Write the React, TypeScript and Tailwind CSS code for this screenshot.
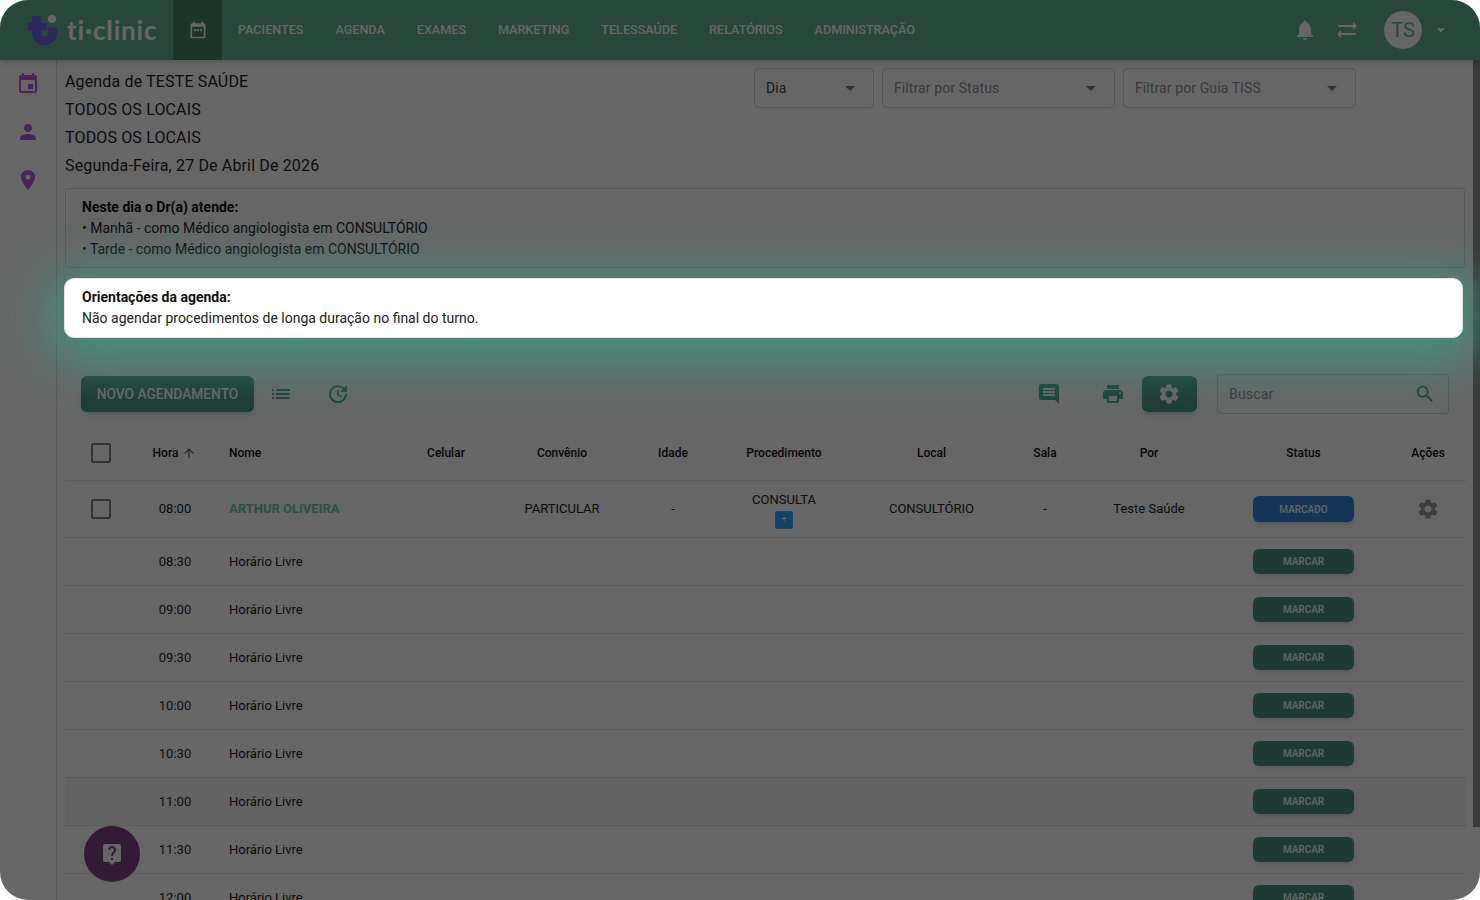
import React from 'react';

const icons = {
  event: 'M17 12h-5v5h5v-5zM16 1v2H8V1H6v2H5c-1.11 0-1.99.9-1.99 2L3 19c0 1.1.89 2 2 2h14c1.1 0 2-.9 2-2V5c0-1.1-.9-2-2-2h-1V1h-2zm3 18H5V8h14v11z',
  person: 'M12 12c2.21 0 4-1.79 4-4s-1.79-4-4-4-4 1.79-4 4 1.79 4 4 4zm0 2c-2.67 0-8 1.34-8 4v2h16v-2c0-2.66-5.33-4-8-4z',
  room: 'M12 2C8.13 2 5 5.13 5 9c0 5.25 7 13 7 13s7-7.75 7-13c0-3.87-3.13-7-7-7zm0 9.5c-1.38 0-2.5-1.12-2.5-2.5s1.12-2.5 2.5-2.5 2.5 1.12 2.5 2.5-1.12 2.5-2.5 2.5z',
  bell: 'M12 22c1.1 0 2-.9 2-2h-4c0 1.1.89 2 2 2zm6-6v-5c0-3.07-1.64-5.64-4.5-6.32V4c0-.83-.67-1.5-1.5-1.5s-1.5.67-1.5 1.5v.68C7.63 5.36 6 7.92 6 11v5l-2 2v1h16v-1l-2-2z',
  syncAlt: 'M22 8l-4-4v3H3v2h15v3l4-4zM2 16l4 4v-3h15v-2H6v-3l-4 4z',
  caret: 'M7 10l5 5 5-5z',
  chat: 'M21.99 4c0-1.1-.89-2-1.99-2H4c-1.1 0-2 .9-2 2v12c0 1.1.9 2 2 2h14l4 4-.01-18zM18 14H6v-2h12v2zm0-3H6V9h12v2zm0-3H6V6h12v2z',
  print: 'M19 8H5c-1.66 0-3 1.34-3 3v6h4v4h12v-4h4v-6c0-1.66-1.34-3-3-3zm-3 11H8v-5h8v5zm3-7c-.55 0-1-.45-1-1s.45-1 1-1 1 .45 1 1-.45 1-1 1zm-1-9H6v4h12V3z',
  gear: 'M19.14 12.94c.04-.3.06-.61.06-.94 0-.32-.02-.64-.07-.94l2.03-1.58c.18-.14.23-.41.12-.61l-1.92-3.32c-.12-.22-.37-.29-.59-.22l-2.39.96c-.5-.38-1.03-.7-1.62-.94l-.36-2.54c-.04-.24-.24-.41-.48-.41h-3.84c-.24 0-.43.17-.47.41l-.36 2.54c-.59.24-1.13.57-1.62.94l-2.39-.96c-.22-.08-.47 0-.59.22L2.74 8.87c-.12.21-.08.47.12.61l2.03 1.58c-.05.3-.09.63-.09.94s.02.64.07.94l-2.03 1.58c-.18.14-.23.41-.12.61l1.92 3.32c.12.22.37.29.59.22l2.39-.96c.5.38 1.03.7 1.62.94l.36 2.54c.05.24.24.41.48.41h3.84c.24 0 .44-.17.47-.41l.36-2.54c.59-.24 1.13-.56 1.62-.94l2.39.96c.22.08.47 0 .59-.22l1.92-3.32c.12-.22.07-.47-.12-.61l-2.01-1.58zM12 15.6c-1.98 0-3.6-1.62-3.6-3.6s1.62-3.6 3.6-3.6 3.6 1.62 3.6 3.6-1.62 3.6-3.6 3.6z',
  search: 'M15.5 14h-.79l-.28-.27C15.41 12.59 16 11.11 16 9.5 16 5.91 13.09 3 9.5 3S3 5.91 3 9.5 5.91 16 9.5 16c1.61 0 3.09-.59 4.23-1.57l.27.28v.79l5 4.99L20.49 19l-4.99-5zm-6 0C7.01 14 5 11.99 5 9.5S7.01 5 9.5 5 14 7.01 14 9.5 11.99 14 9.5 14z',
  list: 'M3 13h2v-2H3v2zm0 4h2v-2H3v2zm0-8h2V7H3v2zm4 4h14v-2H7v2zm0 4h14v-2H7v2zM7 7v2h14V7H7z',
  update: 'M21 10.12h-6.78l2.74-2.82c-2.73-2.7-7.15-2.8-9.88-.1-2.73 2.71-2.73 7.08 0 9.79s7.15 2.71 9.88 0C18.32 15.65 19 14.08 19 12.1h2c0 1.98-.88 4.55-2.64 6.29-3.51 3.48-9.21 3.48-12.72 0-3.5-3.47-3.53-9.11-.02-12.58s9.14-3.47 12.65 0L21 3v7.12zM12.5 8v4.25l3.5 2.08-.72 1.21L11 13V8h1.5z',
  up: 'M4 12l1.41 1.41L11 7.83V20h2V7.83l5.58 5.59L20 12l-8-8-8 8z',
  help: 'M19 2H5c-1.11 0-2 .9-2 2v14c0 1.1.89 2 2 2h4l3 3 3-3h4c1.1 0 2-.9 2-2V4c0-1.1-.9-2-2-2zm-6 16h-2v-2h2v2zm2.07-7.75l-.9.92C13.45 11.9 13 12.5 13 14h-2v-.5c0-1.1.45-2.1 1.17-2.83l1.24-1.26c.37-.36.59-.86.59-1.41 0-1.1-.9-2-2-2s-2 .9-2 2H8c0-2.21 1.79-4 4-4s4 1.79 4 4c0 .88-.36 1.68-.93 2.25z',
  calendar: 'M19 4h-1V2h-2v2H8V2H6v2H5c-1.1 0-2 .9-2 2v14c0 1.1.9 2 2 2h14c1.1 0 2-.9 2-2V6c0-1.1-.9-2-2-2zm0 16H5V8h14v12zM7 11h2.5v2.5H7V11zm3.75 0h2.5v2.5h-2.5V11zM14.5 11H17v2.5h-2.5V11z',
};

const Icon = ({ d, className }: { d: string; className: string }) => (
  <svg viewBox="0 0 24 24" fill="currentColor" className={className}>
    <path d={d} />
  </svg>
);

const navItems = ['PACIENTES', 'AGENDA', 'EXAMES', 'MARKETING', 'TELESSAÚDE', 'RELATÓRIOS', 'ADMINISTRAÇÃO'];
const freeSlots = ['08:30', '09:00', '09:30', '10:00', '10:30', '11:00', '11:30', '12:00'];
const columns = 'grid grid-cols-[72px_76px_187px_92px_140px_82px_140px_155px_72px_136px_173px_76px] items-center';

const Select = ({ label, width, muted }: { label: string; width: string; muted?: boolean }) => (
  <div className={`${width} h-10 flex items-center justify-between pl-[11px] pr-[11px] rounded border border-[#d5d5d5] text-sm tracking-[0.1px] ${muted ? 'text-[#8e8e8e]' : 'text-[#444]'}`}>
    <span>{label}</span>
    <Icon d={icons.caret} className="size-6 text-[#7a7a7a]" />
  </div>
);

const Checkbox = () => <span className="block size-5 rounded-[2px] border-2 border-[#808080]" />;

export default function App() {
  return (
    <div className="w-[1480px] h-[900px] bg-white [font-family:Roboto,sans-serif]">
      <div className="relative w-full h-full rounded-[28px] overflow-hidden bg-white text-[#222]">
        <header className="relative flex items-center h-[60px] pl-[27px] pr-[29px] bg-[#64b294] text-white shadow-md">
          <svg viewBox="27 13 32 33" className="w-8 h-[33px] shrink-0">
            <path d="M36.5 15V32a8 8 0 0 0 16 0V26.5" fill="none" stroke="#7468e0" strokeWidth="9" />
            <rect x="28" y="22" width="19" height="7.5" fill="#7468e0" />
            <circle cx="52" cy="18" r="4" fill="#fff" />
          </svg>
          <span className="ml-2 w-[106px] text-[26px] leading-none font-bold tracking-[0.85px] [font-family:Lato,sans-serif]">ti·clinic</span>
          <div className="flex items-center justify-center w-[49px] h-full bg-[#448466]">
            <Icon d={icons.calendar} className="size-5" />
          </div>
          <nav className="flex">
            {navItems.map((item) => (
              <span key={item} className="px-4 text-[12.6px] font-medium">{item}</span>
            ))}
          </nav>
          <div className="ml-auto flex items-center">
            <Icon d={icons.bell} className="size-6" />
            <Icon d={icons.syncAlt} className="size-6 ml-[18px]" />
            <span className="ml-[25px] flex items-center justify-center size-[38px] rounded-full bg-white text-[#64b294] text-xl">TS</span>
            <Icon d={icons.caret} className="size-5 ml-[9px]" />
          </div>
        </header>

        <div className="flex">
          <aside className="w-[57px] h-[840px] shrink-0 border-r border-[#d8d8d8] text-[#a85cd8]">
            {[icons.event, icons.person, icons.room].map((d) => (
              <div key={d} className="flex items-center justify-center h-12">
                <Icon d={d} className="size-6" />
              </div>
            ))}
          </aside>

          <main className="w-[1416px] px-2 pt-2">
            <div className="flex justify-between">
              <div className="text-base leading-7 tracking-[0.15px]">
                <p>Agenda de TESTE SAÚDE</p>
                <p>TODOS OS LOCAIS</p>
                <p>TODOS OS LOCAIS</p>
                <p>Segunda-Feira, 27 De Abril De 2026</p>
              </div>
              <div className="flex gap-2 mr-[109px]">
                <Select label="Dia" width="w-[120px]" />
                <Select label="Filtrar por Status" width="w-[233px]" muted />
                <Select label="Filtrar por Guia TISS" width="w-[233px]" muted />
              </div>
            </div>

            <div className="mt-2 h-20 px-4 py-2 rounded border border-[#d5d5d5] text-sm leading-[21px]">
              <p className="font-bold text-[#111]">Neste dia o Dr(a) atende:</p>
              <p>• Manhã - como Médico angiologista em CONSULTÓRIO</p>
              <p>• Tarde - como Médico angiologista em CONSULTÓRIO</p>
            </div>

            <div className="relative z-20 mt-[10px] w-[1399px] h-[60px] -ml-px px-[17px] py-2 rounded-[10px] bg-white border border-[#dfe3e3] text-sm leading-[21px] text-[#222] shadow-[0_10px_50px_14px_rgba(66,150,130,0.9)]">
              <p className="font-bold text-[#111]">Orientações da agenda:</p>
              <p>Não agendar procedimentos de longa duração no final do turno.</p>
            </div>

            <div className="mt-9 h-10 flex items-center pl-4 pr-4">
              <button className="h-9 w-[173px] rounded-md bg-[#4a9583] text-white text-[13.75px] font-medium shadow-md">NOVO AGENDAMENTO</button>
              <Icon d={icons.list} className="size-6 ml-[15px] text-[#4fa88e]" />
              <Icon d={icons.update} className="size-6 ml-[33px] text-[#4fa88e]" />
              <Icon d={icons.chat} className="size-6 ml-auto text-[#4fa88e]" />
              <Icon d={icons.print} className="size-6 ml-10 text-[#4fa88e]" />
              <button className="ml-[17px] flex items-center justify-center h-9 w-[55px] pr-0.5 rounded-md bg-[#4a9583] text-white shadow-md">
                <Icon d={icons.gear} className="size-6" />
              </button>
              <div className="ml-5 flex items-center justify-between w-[232px] h-10 pl-[11px] pr-3 rounded border border-[#d5d5d5] text-sm tracking-[0.2px] text-[#8e8e8e]">
                <span>Buscar</span>
                <Icon d={icons.search} className="size-[22px] text-[#4fa88e]" />
              </div>
            </div>

            <div className="mt-[11px] w-[1401px]">
              <div className={`${columns} h-14 border-b border-[#e0e0e0] text-xs font-medium text-[#111] text-center`}>
                <span className="flex justify-center"><Checkbox /></span>
                <span className="flex items-center justify-center gap-1 pr-px">Hora<Icon d={icons.up} className="size-3.5 text-[#555]" /></span>
                <span className="text-left pl-4">Nome</span>
                <span>Celular</span>
                <span>Convênio</span>
                <span>Idade</span>
                <span>Procedimento</span>
                <span>Local</span>
                <span>Sala</span>
                <span>Por</span>
                <span>Status</span>
                <span>Ações</span>
              </div>

              <div className={`${columns} h-[57px] border-b border-[#e0e0e0] text-[13px] text-center`}>
                <span className="flex justify-center"><Checkbox /></span>
                <span>08:00</span>
                <span className="text-left pl-4 font-bold text-[#66cdaa]">ARTHUR OLIVEIRA</span>
                <span />
                <span>PARTICULAR</span>
                <span>-</span>
                <span className="flex flex-col items-center pt-px">
                  CONSULTA
                  <span className="mt-px flex items-center justify-center size-[18px] rounded-[2px] bg-[#2ca8ff] text-white text-[9px] leading-none">+</span>
                </span>
                <span>CONSULTÓRIO</span>
                <span>-</span>
                <span>Teste Saúde</span>
                <span className="flex justify-center">
                  <span className="flex items-center justify-center w-[101px] h-[26px] rounded-md bg-[#3586d6] text-white text-[10px] font-medium shadow-md">MARCADO</span>
                </span>
                <span className="flex justify-center"><Icon d={icons.gear} className="size-6 text-[#9a9a9a]" /></span>
              </div>

              {freeSlots.map((time) => (
                <div key={time} className={`${columns} h-12 border-b border-[#e0e0e0] text-[13px] text-center ${time === '11:00' ? 'bg-[#f7f7f7]' : ''}`}>
                  <span />
                  <span>{time}</span>
                  <span className="text-left pl-4">Horário Livre</span>
                  <span className="col-start-11 flex justify-center">
                    <span className="flex items-center justify-center w-[101px] h-[25px] rounded-md bg-[#4a9583] text-white text-[10px] font-medium shadow-md">MARCAR</span>
                  </span>
                </div>
              ))}
            </div>
          </main>

          <div className="w-[7px] shrink-0">
            <div className="h-[767px] bg-[#8e8e8e]" />
          </div>
        </div>

        <div className="absolute left-[84px] top-[826px] z-[5] flex items-center justify-center size-14 rounded-full bg-[#804588] text-white">
          <Icon d={icons.help} className="size-6" />
        </div>

        <div className="absolute inset-0 z-10 bg-black/60" />
      </div>
    </div>
  );
}
